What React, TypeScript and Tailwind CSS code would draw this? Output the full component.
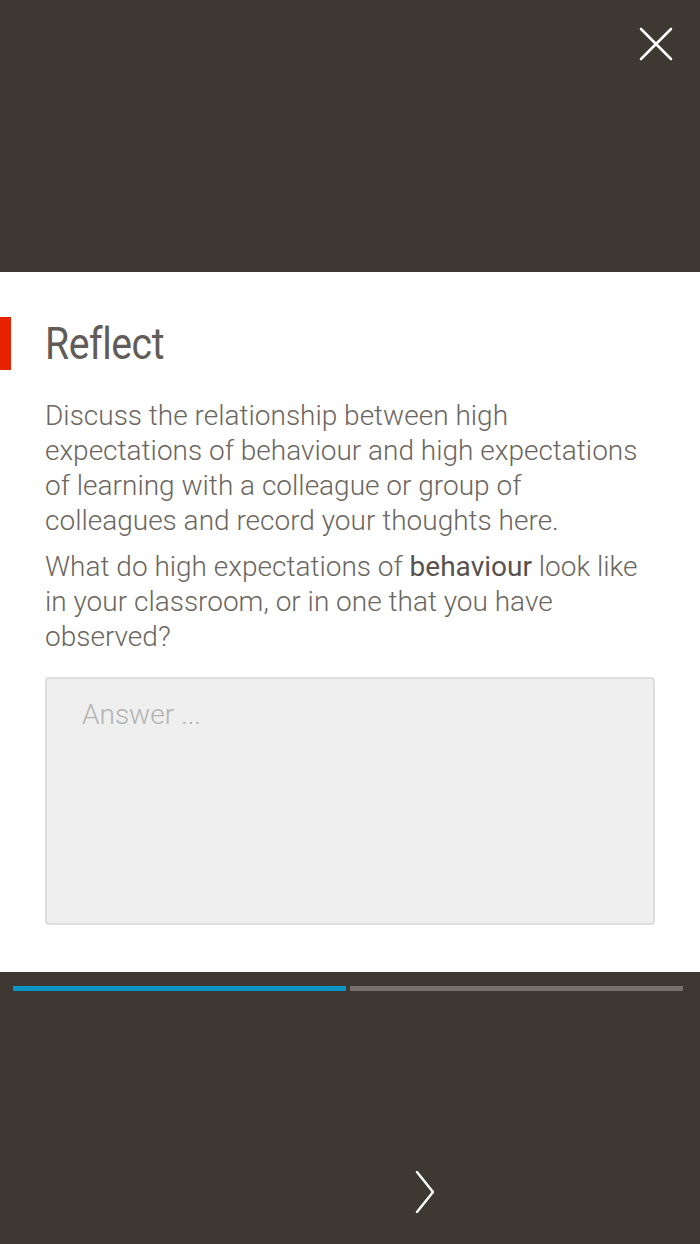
import { useState } from 'react';

export default function App() {
  const [answer, setAnswer] = useState('');

  return (
    <div className="w-[700px] h-[1244px] flex flex-col bg-[#3d3832] font-['Roboto',sans-serif] overflow-hidden">
      {/* Top bar */}
      <div className="h-[272px] flex justify-end items-start shrink-0">
        <button className="mt-[27px] mr-[27px] w-[34px] h-[34px] flex items-center justify-center">
          <svg width="34" height="34" viewBox="0 0 34 34" fill="none">
            <path d="M2 2L32 32M32 2L2 32" stroke="#ffffff" strokeWidth="2.6" strokeLinecap="round" />
          </svg>
        </button>
      </div>

      {/* Card */}
      <div className="bg-white shrink-0 pt-[45px] pb-[47px]">
        <div className="relative flex items-center h-[53px]">
          <div className="absolute left-0 top-0 w-[11px] h-[53px] bg-[#e62200]" />
          <h1 className="ml-[45px] text-[45px] leading-none text-[#615c57] font-normal tracking-[-0.5px] scale-x-[0.87] origin-left">
            Reflect
          </h1>
        </div>

        <div className="px-[45px] mt-[28px] text-[28px] leading-[35px] font-light text-[#6b6660]">
          <p>
            Discuss the relationship between high expectations of behaviour and high expectations
            of learning with a colleague or group of colleagues and record your thoughts here.
          </p>
          <p className="mt-[11px]">
            What do high expectations of <span className="font-normal text-[#57524d]">behaviour</span> look like
            in your classroom, or in one that you have observed?
          </p>

          <textarea
            value={answer}
            onChange={(e) => setAnswer(e.target.value)}
            placeholder="Answer ..."
            className="mt-[23px] block w-[610px] h-[248px] resize-none rounded-[4px] border-2 border-[#dedede] bg-[#efefef] pl-[35px] pr-4 pt-[18px] text-[28px] leading-[35px] font-light text-[#6b6660] placeholder:text-[#b3b3b3] outline-none"
          />
        </div>
      </div>

      {/* Bottom area */}
      <div className="flex-1 flex flex-col">
        <div className="flex gap-[4px] pl-[13px] pr-[17px] pt-[14px]">
          <div className="flex-1 h-[5px] bg-[#0a95c6]" />
          <div className="flex-1 h-[5px] bg-[#777169]" />
        </div>
        <div className="flex-1 flex items-end justify-center pb-[30px]">
          <button className="ml-[150px] w-[24px] h-[44px] flex items-center justify-center">
            <svg width="20" height="42" viewBox="0 0 20 42" fill="none">
              <path d="M2 1L18 21L2 41" stroke="#ffffff" strokeWidth="2.4" strokeLinecap="round" strokeLinejoin="round" />
            </svg>
          </button>
        </div>
      </div>
    </div>
  );
}
